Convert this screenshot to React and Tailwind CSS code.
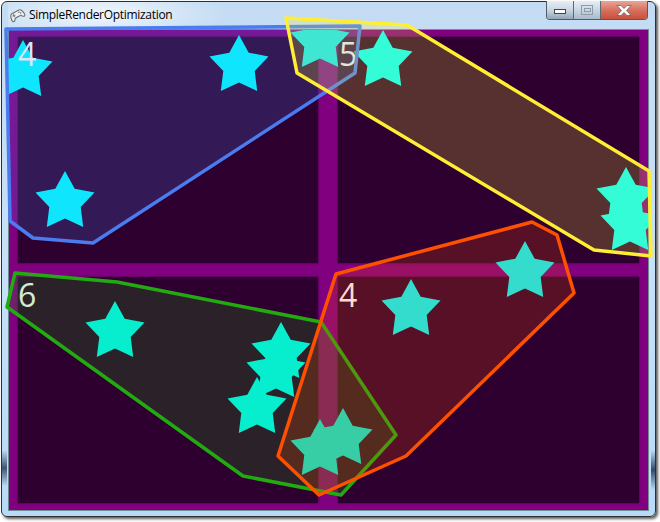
const FONT = 'font-["Open_Sans",sans-serif]';

// x,y of the star centres per cluster, painted under the hull fills
const STARS = [
  [23, 71], [239, 66], [65, 202], [320, 42],
  [383, 61], [626, 198], [630, 225],
  [115, 332], [281, 353], [276, 372], [257, 408], [320, 450], [343, 439],
  [411, 310], [525, 272],
];

const HULLS = [
  { color: '#4a7cf0', points: '6,29 360,26 355,73 93,243 33,238 10,221' },
  { color: '#ffee33', points: '286,18 407,25 649,171 651,256 594,250 297,73' },
  { color: '#22aa11', points: '15,273 117,282 321,322 396,435 341,495 243,476 7,307' },
  { color: '#ff5000', points: '336,274 532,222 557,235 574,293 406,456 319,495 278,456' },
];

const LABELS = [
  { text: '4', className: 'left-[18px] top-[36px]' },
  { text: '5', className: 'left-[339px] top-[36px]' },
  { text: '6', className: 'left-[18px] top-[277px]' },
  { text: '4', className: 'left-[339px] top-[277px]' },
];

const starPoints = (cx, cy, outer = 31, inner = 16.5) => {
  const points = [];
  for (let i = 0; i < 10; i++) {
    const radius = i % 2 === 0 ? outer : inner;
    const angle = (Math.PI / 5) * i - Math.PI / 2;
    points.push(`${cx + radius * Math.cos(angle)},${cy + radius * Math.sin(angle)}`);
  }
  return points.join(' ');
};

const Cell = () => <div className="bg-[#2e0030] shadow-[0_0_2px_#2e0030]" />;

const GamepadIcon = () => (
  <svg width="16" height="16" viewBox="0 0 16 16" className="-rotate-[28deg]">
    <path
      d="M4 4.500h8c2 0 3.200 3.400 3.200 6.200 0 2-1.800 2.200-3 .6l-1-1.300H5l-1 1.300c-1.200 1.600-3 1.400-3-.6C1 7.900 2 4.500 4 4.500z"
      fill="#eceef0"
      stroke="#6b7176"
      strokeWidth="1.100"
    />
    <rect x="3.500" y="6.500" width="3" height="1.200" fill="#7b8186" />
    <rect x="4.400" y="5.600" width="1.200" height="3" fill="#7b8186" />
    <circle cx="11" cy="6.500" r="0.800" fill="#7b8186" />
    <circle cx="12.200" cy="8" r="0.800" fill="#7b8186" />
  </svg>
);

const CloseIcon = () => (
  <svg width="16" height="11" viewBox="0 0 16 11">
    <path
      d="M1 .5h4l3 3 3-3h4l-4.500 5 4.500 5h-4l-3-3-3 3H1l4.500-5z"
      fill="#fff"
      stroke="#5a5a5a"
      strokeWidth="0.700"
    />
  </svg>
);

const WindowButtons = () => (
  <div className="flex h-[19px] overflow-hidden rounded-b-[4px] border border-t-0 border-[#4f5b66] bg-white/40">
    <div className="flex w-[27px] items-center justify-center border-r border-[#5d6a76] bg-gradient-to-b from-[#e6eef6] via-[#c9d6e2] to-[#93a6b6]">
      <div className="mt-[3px] h-[5px] w-[12px] border border-[#3c4650] bg-white" />
    </div>
    <div className="flex w-[27px] items-center justify-center border-r border-[#5d6a76] bg-gradient-to-b from-[#e6eef6] via-[#c9d6e2] to-[#a8bac8]">
      <div className="flex h-[10px] w-[12px] items-center justify-center border border-[#8d9ca8]">
        <div className="h-[4px] w-[7px] border border-[#8d9ca8]" />
      </div>
    </div>
    <div className="flex w-[46px] items-center justify-center bg-gradient-to-b from-[#e8a597] via-[#d8705f] to-[#c9503a]">
      <CloseIcon />
    </div>
  </div>
);

const App = () => (
  <div className="relative h-[522px] w-[660px] overflow-hidden bg-white">
    <div className="mt-px ml-px flex h-[516px] w-[655px] flex-col rounded-[6px] border border-[#2b2f33] bg-gradient-to-b from-[#c4dcf3] via-[#c6e0f8] to-[#b9daf6] px-[6px] pb-[5px] shadow-[2px_2px_3px_rgba(0,0,0,0.65)]">
      <div className="relative flex h-[27px] shrink-0 items-start justify-between bg-[radial-gradient(ellipse_130px_30px_at_90px_12px,rgba(255,255,255,0.75),transparent)]">
        <div className="mt-[5px] flex items-center gap-[4px] pl-px">
          <GamepadIcon />
          <span className={`${FONT} text-[12px] leading-4 tracking-[-0.3px] text-black`}>SimpleRenderOptimization</span>
        </div>
        <div className="mr-[1px] -mt-px">
          <WindowButtons />
        </div>
      </div>
      <div className="grid h-[482px] grid-cols-[300px_301px] grid-rows-2 gap-x-5 gap-y-[14px] border border-[#6f8c96] bg-[#800080] px-[9px] py-[7px]">
        <Cell />
        <Cell />
        <Cell />
        <Cell />
      </div>
    </div>

    <div className="absolute top-[450px] left-[2px] h-[36px] w-[5px] bg-gradient-to-b from-transparent via-[#3f5470] to-transparent" />
    <div className="absolute top-[450px] left-[651px] h-[40px] w-[4px] bg-gradient-to-b from-transparent via-[#34496a] to-transparent" />

    <svg className="absolute top-0 left-0" width="660" height="522">
      <defs>
        <clipPath id="client">
          <rect x="8" y="30" width="641" height="480" />
        </clipPath>
      </defs>
      <g clipPath="url(#client)">
        <g className="blur-[0.7px]">
          {STARS.map(([x, y], index) => (
            <polygon key={index} points={starPoints(x, y)} fill="#00ffff" />
          ))}
        </g>
      </g>
    </svg>

    {LABELS.map((label, index) => (
      <span key={index} className={`absolute ${label.className} ${FONT} text-[32px] leading-[36px] text-white`}>
        {label.text}
      </span>
    ))}

    <svg className="absolute top-0 left-0" width="660" height="522">
      {HULLS.map((hull) => (
        <polygon
          key={hull.color}
          points={hull.points}
          fill={hull.color}
          fillOpacity="0.2"
          stroke={hull.color}
          strokeWidth="3.5"
          strokeLinejoin="round"
        />
      ))}
    </svg>
  </div>
);

export default App;
